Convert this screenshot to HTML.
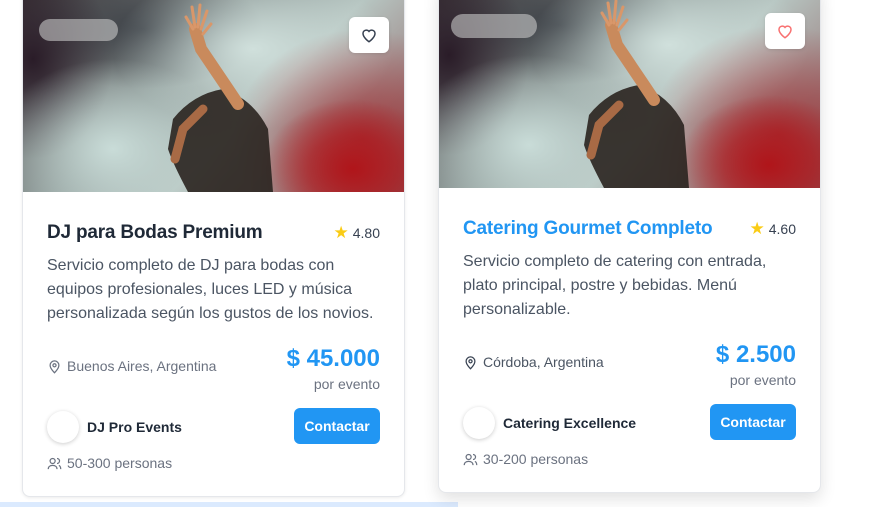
<!DOCTYPE html>
<html><head><meta charset="utf-8"><style>
*{box-sizing:border-box;margin:0;padding:0}
body{width:869px;height:507px;background:#fff;font-family:"Liberation Sans",sans-serif;position:relative;overflow:hidden}
.card{position:absolute;width:383px;background:#fff;border:1px solid #e5e7eb;border-radius:8px;overflow:hidden}
.c1{left:22px;top:-12px;height:509px;box-shadow:0 1px 3px rgba(0,0,0,.08)}
.c2{left:438px;top:-16px;height:509px;box-shadow:0 6px 16px rgba(0,0,0,.12)}
.img{position:absolute;left:0;top:0;width:383px;height:203px;overflow:hidden;
background:
radial-gradient(ellipse 90px 70px at 330px 180px,#b0151a 0%,rgba(176,21,26,.6) 50%,rgba(176,21,26,0) 100%),
radial-gradient(ellipse 130px 110px at 340px 150px,rgba(160,40,45,.8) 0%,rgba(160,40,45,0) 100%),
radial-gradient(ellipse 120px 90px at 90px 160px,#c9dcd8 0%,rgba(201,220,216,0) 100%),
radial-gradient(ellipse 140px 80px at 230px 60px,#d0e0dc 0%,rgba(208,224,220,0) 100%),
radial-gradient(ellipse 80px 100px at 10px 70px,#2a1c28 0%,rgba(42,28,40,0) 100%),
radial-gradient(ellipse 120px 60px at 120px 40px,#3c4046 0%,rgba(60,64,70,0) 100%),
linear-gradient(135deg,#3a3236 0%,#8e9a98 40%,#b7c6c2 60%,#8a5558 100%)}
.badge{position:absolute;border-radius:12px;background:rgba(200,200,200,.6)}
.heart{position:absolute;width:40px;height:36px;background:#fff;border-radius:6px;display:flex;align-items:center;justify-content:center;box-shadow:0 1px 3px rgba(0,0,0,.1)}
.title{position:absolute;left:24px;font-size:19px;font-weight:600;color:#1f2937;letter-spacing:-0.2px}
.rate{position:absolute;right:24px;font-size:14px;color:#374151;display:flex;align-items:center;gap:4px}
.desc{position:absolute;left:24px;width:340px;font-size:16px;line-height:24px;color:#4b5563}
.loc{position:absolute;left:24px;font-size:14px;color:#6b7280;display:flex;align-items:center;gap:5px}
.price{position:absolute;right:24px;text-align:right;font-size:24px;font-weight:700;color:#2196f3}
.per{position:absolute;right:24px;font-size:14px;color:#6b7280}
.av{position:absolute;left:24px;width:32px;height:32px;border-radius:50%;background:#fff;box-shadow:0 1px 4px rgba(0,0,0,.2)}
.prov{position:absolute;left:64px;font-size:14px;font-weight:600;color:#1f2937}
.btn{position:absolute;right:24px;width:86px;height:36px;background:#2196f3;color:#fff;border-radius:6px;font-size:14px;font-weight:700;display:flex;align-items:center;justify-content:center}
.cap{position:absolute;left:24px;font-size:14px;color:#6b7280;display:flex;align-items:center;gap:5px}
</style></head><body>

<div style="position:absolute;left:0;top:502px;width:458px;height:5px;background:#dbeafe"></div>

<div class="card c1">
 <div class="img">
  <svg width="383" height="203" style="position:absolute;left:0;top:0">
   <g fill="#2a231f" opacity=".9"><path d="M150 130 Q170 105 200 100 Q230 110 245 140 L250 203 L165 203 Q150 175 145 160 Z"/></g>
   <path d="M172 40 L178 60 L205 100 L215 115" stroke="#c98a5c" stroke-width="12" fill="none" stroke-linecap="round"/>
   <path d="M152 170 L160 140 L180 120" stroke="#a86a45" stroke-width="9" fill="none" stroke-linecap="round"/>
   <g stroke="#d9976a" stroke-width="3" stroke-linecap="round"><path d="M170 40 L163 28"/><path d="M172 38 L169 18"/><path d="M175 38 L177 16"/><path d="M178 40 L184 22"/><path d="M180 45 L188 35"/></g>
  </svg>
  <div class="badge" style="left:16px;top:30px;width:79px;height:22px"></div>
  <div class="heart" style="left:326px;top:28px"><svg width="18" height="18" viewBox="0 0 24 24" fill="none" stroke="#374151" stroke-width="2"><path d="M12 21s-8-5.5-8-11a4.5 4.5 0 0 1 8-2.8A4.5 4.5 0 0 1 20 10c0 5.5-8 11-8 11z"/></svg></div>
 </div>
 <div class="title" style="top:233px">DJ para Bodas Premium</div>
 <div class="rate" style="top:234px"><span style="color:#facc15;font-size:17px">★</span>4.80</div>
 <div class="desc" style="top:265px">Servicio completo de DJ para bodas con equipos profesionales, luces LED y música personalizada según los gustos de los novios.</div>
 <div class="loc" style="top:369px"><svg width="15" height="15" viewBox="0 0 24 24" fill="none" stroke="#6b7280" stroke-width="2"><path d="M12 22s7-6.5 7-12a7 7 0 0 0-14 0c0 5.5 7 12 7 12z"/><circle cx="12" cy="10" r="2.5"/></svg>Buenos Aires, Argentina</div>
 <div class="price" style="top:356px">$ 45.000</div>
 <div class="per" style="top:387px">por evento</div>
 <div class="av" style="top:422px"></div>
 <div class="prov" style="top:430px">DJ Pro Events</div>
 <div class="btn" style="top:419px">Contactar</div>
 <div class="cap" style="top:466px"><svg width="15" height="15" viewBox="0 0 24 24" fill="none" stroke="#6b7280" stroke-width="2"><circle cx="9" cy="8" r="4"/><path d="M2 21c0-4 3-6 7-6s7 2 7 6"/><path d="M16 4a4 4 0 0 1 0 8M19 15c2 1 3 3 3 6"/></svg>50-300 personas</div>
</div>

<div class="card c2">
 <div class="img">
  <svg width="383" height="203" style="position:absolute;left:0;top:0">
   <g fill="#2a231f" opacity=".9"><path d="M150 130 Q170 105 200 100 Q230 110 245 140 L250 203 L165 203 Q150 175 145 160 Z"/></g>
   <path d="M172 40 L178 60 L205 100 L215 115" stroke="#c98a5c" stroke-width="12" fill="none" stroke-linecap="round"/>
   <path d="M152 170 L160 140 L180 120" stroke="#a86a45" stroke-width="9" fill="none" stroke-linecap="round"/>
   <g stroke="#d9976a" stroke-width="3" stroke-linecap="round"><path d="M170 40 L163 28"/><path d="M172 38 L169 18"/><path d="M175 38 L177 16"/><path d="M178 40 L184 22"/><path d="M180 45 L188 35"/></g>
  </svg>
  <div class="badge" style="left:12px;top:29px;width:86px;height:24px"></div>
  <div class="heart" style="left:326px;top:28px"><svg width="18" height="18" viewBox="0 0 24 24" fill="none" stroke="#f87171" stroke-width="2"><path d="M12 21s-8-5.5-8-11a4.5 4.5 0 0 1 8-2.8A4.5 4.5 0 0 1 20 10c0 5.5-8 11-8 11z"/></svg></div>
 </div>
 <div class="title" style="top:233px;color:#2196f3">Catering Gourmet Completo</div>
 <div class="rate" style="top:234px"><span style="color:#facc15;font-size:17px">★</span>4.60</div>
 <div class="desc" style="top:265px">Servicio completo de catering con entrada, plato principal, postre y bebidas. Menú personalizable.</div>
 <div class="loc" style="top:369px"><svg width="15" height="15" viewBox="0 0 24 24" fill="none" stroke="#374151" stroke-width="2"><path d="M12 22s7-6.5 7-12a7 7 0 0 0-14 0c0 5.5 7 12 7 12z"/><circle cx="12" cy="10" r="2.5"/></svg><span style="color:#4b5563">Córdoba, Argentina</span></div>
 <div class="price" style="top:356px">$ 2.500</div>
 <div class="per" style="top:387px">por evento</div>
 <div class="av" style="top:422px"></div>
 <div class="prov" style="top:430px">Catering Excellence</div>
 <div class="btn" style="top:419px">Contactar</div>
 <div class="cap" style="top:466px"><svg width="15" height="15" viewBox="0 0 24 24" fill="none" stroke="#6b7280" stroke-width="2"><circle cx="9" cy="8" r="4"/><path d="M2 21c0-4 3-6 7-6s7 2 7 6"/><path d="M16 4a4 4 0 0 1 0 8M19 15c2 1 3 3 3 6"/></svg>30-200 personas</div>
</div>
</body></html>
